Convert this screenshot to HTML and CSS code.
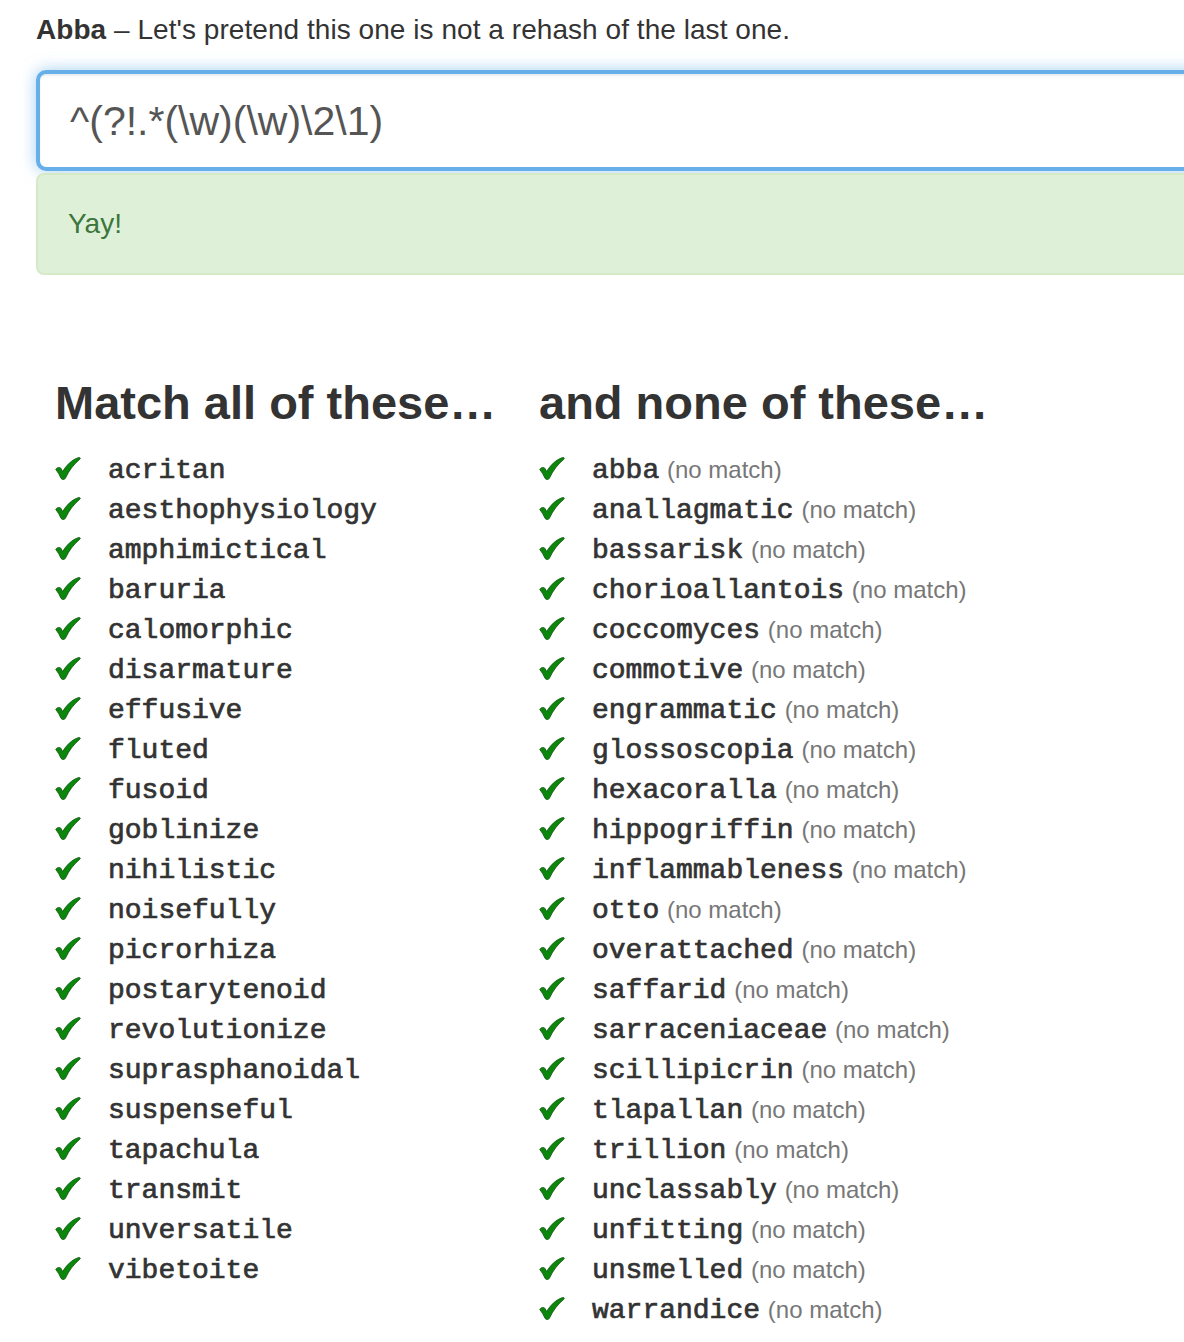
FILE: index.html
```html
<!DOCTYPE html>
<html>
<head>
<meta charset="utf-8">
<link rel="stylesheet" href="styles.css">
</head>
<body>
<svg width="0" height="0" class="defs" aria-hidden="true">
  <defs>
    <symbol id="tick" viewBox="0 0 26 23">
      <path d="M0.8 12.4 C2.2 10.2 5 9.8 6.2 11.8 L7.6 14.6 C11.4 8.4 16.6 2.8 23.6 0.6 C25 0.2 25.8 1.2 24.8 2.2 C18.4 7.6 13.8 13.8 10.4 21.2 C9.6 22.8 7 22.9 6.1 21.4 C4.8 18.2 3 15.2 0.8 12.4 Z" fill="#0b870b" stroke="#175c17" stroke-width="0.9" stroke-linejoin="round"/>
    </symbol>
  </defs>
</svg>
<div class="page">
  <p class="intro"><strong>Abba</strong> – Let's pretend this one is not a rehash of the last one.</p>
  <div class="regex-input">^(?!.*(\w)(\w)\2\1)</div>
  <div class="alert">Yay!</div>

  <div class="columns">
    <div class="col">
      <h2 class="col-title">Match all of these…</h2>
      <ul class="words">
        <li><svg class="check"><use href="#tick"/></svg><span class="word">acritan</span></li>
        <li><svg class="check"><use href="#tick"/></svg><span class="word">aesthophysiology</span></li>
        <li><svg class="check"><use href="#tick"/></svg><span class="word">amphimictical</span></li>
        <li><svg class="check"><use href="#tick"/></svg><span class="word">baruria</span></li>
        <li><svg class="check"><use href="#tick"/></svg><span class="word">calomorphic</span></li>
        <li><svg class="check"><use href="#tick"/></svg><span class="word">disarmature</span></li>
        <li><svg class="check"><use href="#tick"/></svg><span class="word">effusive</span></li>
        <li><svg class="check"><use href="#tick"/></svg><span class="word">fluted</span></li>
        <li><svg class="check"><use href="#tick"/></svg><span class="word">fusoid</span></li>
        <li><svg class="check"><use href="#tick"/></svg><span class="word">goblinize</span></li>
        <li><svg class="check"><use href="#tick"/></svg><span class="word">nihilistic</span></li>
        <li><svg class="check"><use href="#tick"/></svg><span class="word">noisefully</span></li>
        <li><svg class="check"><use href="#tick"/></svg><span class="word">picrorhiza</span></li>
        <li><svg class="check"><use href="#tick"/></svg><span class="word">postarytenoid</span></li>
        <li><svg class="check"><use href="#tick"/></svg><span class="word">revolutionize</span></li>
        <li><svg class="check"><use href="#tick"/></svg><span class="word">suprasphanoidal</span></li>
        <li><svg class="check"><use href="#tick"/></svg><span class="word">suspenseful</span></li>
        <li><svg class="check"><use href="#tick"/></svg><span class="word">tapachula</span></li>
        <li><svg class="check"><use href="#tick"/></svg><span class="word">transmit</span></li>
        <li><svg class="check"><use href="#tick"/></svg><span class="word">unversatile</span></li>
        <li><svg class="check"><use href="#tick"/></svg><span class="word">vibetoite</span></li>
      </ul>
    </div>
    <div class="col">
      <h2 class="col-title">and none of these…</h2>
      <ul class="words">
        <li><svg class="check"><use href="#tick"/></svg><span class="word">abba</span> <small class="note">(no match)</small></li>
        <li><svg class="check"><use href="#tick"/></svg><span class="word">anallagmatic</span> <small class="note">(no match)</small></li>
        <li><svg class="check"><use href="#tick"/></svg><span class="word">bassarisk</span> <small class="note">(no match)</small></li>
        <li><svg class="check"><use href="#tick"/></svg><span class="word">chorioallantois</span> <small class="note">(no match)</small></li>
        <li><svg class="check"><use href="#tick"/></svg><span class="word">coccomyces</span> <small class="note">(no match)</small></li>
        <li><svg class="check"><use href="#tick"/></svg><span class="word">commotive</span> <small class="note">(no match)</small></li>
        <li><svg class="check"><use href="#tick"/></svg><span class="word">engrammatic</span> <small class="note">(no match)</small></li>
        <li><svg class="check"><use href="#tick"/></svg><span class="word">glossoscopia</span> <small class="note">(no match)</small></li>
        <li><svg class="check"><use href="#tick"/></svg><span class="word">hexacoralla</span> <small class="note">(no match)</small></li>
        <li><svg class="check"><use href="#tick"/></svg><span class="word">hippogriffin</span> <small class="note">(no match)</small></li>
        <li><svg class="check"><use href="#tick"/></svg><span class="word">inflammableness</span> <small class="note">(no match)</small></li>
        <li><svg class="check"><use href="#tick"/></svg><span class="word">otto</span> <small class="note">(no match)</small></li>
        <li><svg class="check"><use href="#tick"/></svg><span class="word">overattached</span> <small class="note">(no match)</small></li>
        <li><svg class="check"><use href="#tick"/></svg><span class="word">saffarid</span> <small class="note">(no match)</small></li>
        <li><svg class="check"><use href="#tick"/></svg><span class="word">sarraceniaceae</span> <small class="note">(no match)</small></li>
        <li><svg class="check"><use href="#tick"/></svg><span class="word">scillipicrin</span> <small class="note">(no match)</small></li>
        <li><svg class="check"><use href="#tick"/></svg><span class="word">tlapallan</span> <small class="note">(no match)</small></li>
        <li><svg class="check"><use href="#tick"/></svg><span class="word">trillion</span> <small class="note">(no match)</small></li>
        <li><svg class="check"><use href="#tick"/></svg><span class="word">unclassably</span> <small class="note">(no match)</small></li>
        <li><svg class="check"><use href="#tick"/></svg><span class="word">unfitting</span> <small class="note">(no match)</small></li>
        <li><svg class="check"><use href="#tick"/></svg><span class="word">unsmelled</span> <small class="note">(no match)</small></li>
        <li><svg class="check"><use href="#tick"/></svg><span class="word">warrandice</span> <small class="note">(no match)</small></li>
      </ul>
    </div>
  </div>
</div>
</body>
</html>
```

FILE: styles.css
```css
html, body {
  margin: 0;
  padding: 0;
  background: #fff;
}

body {
  font-family: "Liberation Sans", Arial, Helvetica, sans-serif;
  font-size: 28px;
  line-height: 40px;
  color: #333;
  overflow: hidden;
}

.defs {
  position: absolute;
  width: 0;
  height: 0;
}

.page {
  padding: 10px 0 0 36px;
}

.intro {
  margin: 0;
  height: 40px;
  letter-spacing: 0.05px;
}

.intro strong {
  font-weight: bold;
}

.regex-input {
  margin-top: 20px;
  margin-right: -40px;
  height: 101px;
  box-sizing: border-box;
  border: 4px solid #66afe9;
  border-radius: 10px;
  padding: 0 30px;
  font-size: 41px;
  line-height: 95px;
  color: #555;
  box-shadow: inset 0 2px 2px rgba(0, 0, 0, .075), 0 0 16px rgba(102, 175, 233, .6);
  background: #fff;
}

.alert {
  margin-top: 2px;
  margin-right: -40px;
  height: 102px;
  box-sizing: border-box;
  border: 2px solid #d6e9c6;
  border-radius: 8px;
  background: #dff0d8;
  color: #3c763d;
  padding: 0 30px;
  line-height: 98px;
}

.columns {
  display: flex;
  margin-top: 100px;
  padding-left: 19px;
}

.col {
  width: 484px;
}

.col-title {
  margin: 0 0 18px;
  font-size: 47px;
  line-height: 55px;
  font-weight: bold;
  color: #333;
  letter-spacing: 0;
}

.words {
  list-style: none;
  margin: 0;
  padding: 0;
}

.words li {
  height: 40px;
  line-height: 41px;
  white-space: nowrap;
}

.check {
  display: inline-block;
  width: 26px;
  height: 23px;
  margin-right: 27px;
  vertical-align: -2px;
}

.word {
  font-family: "Liberation Mono", "Courier New", monospace;
  font-weight: normal;
  font-size: 28px;
  color: #333;
  -webkit-text-stroke: 0.7px #333;
}

.note {
  font-size: 24px;
  color: #777;
}
```
